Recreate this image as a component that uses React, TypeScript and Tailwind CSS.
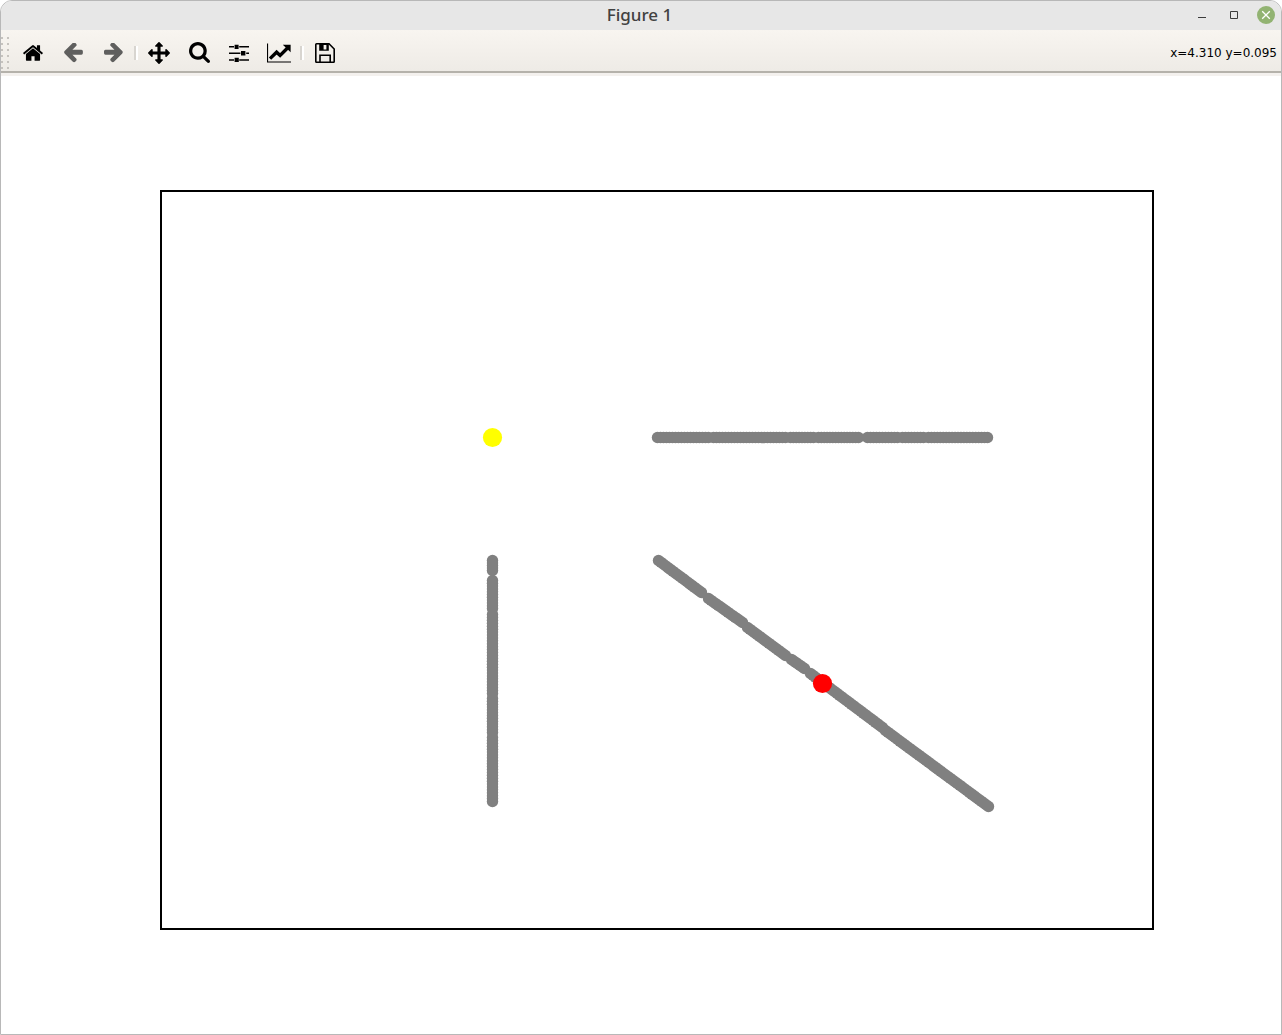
import type { ReactNode } from "react";

type Point = [number, number];

type Run = {
  from: Point;
  to: Point;
};

// canvas coordinates, each run is a stretch of densely sampled points
const runs: Run[] = [
  { from: [656, 361], to: [707, 361] },
  { from: [712, 361], to: [784, 361] },
  { from: [789, 361], to: [812, 361] },
  { from: [817, 361], to: [857, 361] },
  { from: [866, 361], to: [896, 361] },
  { from: [901, 361], to: [922, 361] },
  { from: [927, 361], to: [986, 361] },
  { from: [491, 484], to: [491, 494] },
  { from: [491, 504], to: [491, 532] },
  { from: [491, 538], to: [491, 617] },
  { from: [491, 622], to: [491, 656] },
  { from: [491, 661], to: [491, 725] },
  { from: [657, 484], to: [700, 516] },
  { from: [707, 522], to: [741, 546] },
  { from: [746, 551], to: [784, 579] },
  { from: [790, 583], to: [803, 592] },
  { from: [809, 597], to: [881, 651] },
  { from: [884, 654], to: [987, 730] },
];

const samplePoints = ({ from, to }: Run): Point[] => {
  const steps = Math.ceil(Math.hypot(to[0] - from[0], to[1] - from[1]) / 3);
  return Array.from({ length: steps + 1 }, (_, i): Point => [
    from[0] + ((to[0] - from[0]) * i) / steps + 0.5,
    from[1] + ((to[1] - from[1]) * i) / steps + 0.5,
  ]);
};

const wallPoints = runs.flatMap(samplePoints);

const HomeIcon = () => (
  <svg viewBox="0 0 1792 1792" className="w-[22px] h-[22px]" fill="currentColor">
    <path d="M1472 992v480q0 26-19 45t-45 19h-384v-384h-256v384h-384q-26 0-45-19t-19-45v-480q0-1 .5-3t.5-3l575-474 575 474q1 2 1 6zm223-69l-62 74q-8 9-21 11h-3q-13 0-21-7l-692-577-692 577q-12 8-24 7-13-2-21-11l-62-74q-8-10-7-23.5t11-21.5l719-599q32-26 76-26t76 26l244 204v-195q0-14 9-23t23-9h192q14 0 23 9t9 23v408l219 182q10 8 11 21.5t-7 23.5z" />
  </svg>
);

const BackIcon = () => (
  <svg viewBox="182 141 1492 1502" className="w-[19px] h-5" fill="currentColor">
    <path d="M1664 896v128q0 53-32.5 90.5t-84.5 37.5h-704l293 294q38 36 38 90t-38 90l-75 76q-37 37-90 37-52 0-91-37l-651-652q-37-37-37-90 0-52 37-91l651-650q38-38 91-38 52 0 90 38l75 74q38 38 38 91t-38 91l-293 293h704q52 0 84.5 37.5t32.5 90.5z" transform="translate(0 -128)" />
  </svg>
);

const ForwardIcon = () => (
  <svg viewBox="182 141 1492 1502" className="w-[19px] h-5" fill="currentColor">
    <path d="M1664 896v128q0 53-32.5 90.5t-84.5 37.5h-704l293 294q38 36 38 90t-38 90l-75 76q-37 37-90 37-52 0-91-37l-651-652q-37-37-37-90 0-52 37-91l651-650q38-38 91-38 52 0 90 38l75 74q38 38 38 91t-38 91l-293 293h704q52 0 84.5 37.5t32.5 90.5z" transform="translate(1846 -128) scale(-1 1)" />
  </svg>
);

const PanIcon = () => (
  <svg viewBox="0 0 1792 1792" className="w-[22px] h-[22px]" fill="currentColor">
    <path d="M1792 896q0 26-19 45l-256 256q-19 19-45 19t-45-19-19-45v-128h-384v384h128q26 0 45 19t19 45-19 45l-256 256q-19 19-45 19t-45-19l-256-256q-19-19-19-45t19-45 45-19h128v-384h-384v128q0 26-19 45t-45 19-45-19l-256-256q-19-19-19-45t19-45l256-256q19-19 45-19t45 19 19 45v128h384v-384h-128q-26 0-45-19t-19-45 19-45l256-256q19-19 45-19t45 19l256 256q19 19 19 45t-19 45-45 19h-128v384h384v-128q0-26 19-45t45-19 45 19l256 256q19 19 19 45z" />
  </svg>
);

const ZoomIcon = () => (
  <svg viewBox="64 128 1664 1664" className="w-[21px] h-[21px]" fill="currentColor">
    <path d="M1216 832q0-185-131.5-316.5t-316.5-131.5-316.5 131.5-131.5 316.5 131.5 316.5 316.5 131.5 316.5-131.5 131.5-316.5zm512 832q0 52-38 90t-90 38q-54 0-90-38l-343-342q-179 124-399 124-143 0-273.5-55.5t-225-150-150-225-55.5-273.5 55.5-273.5 150-225 225-150 273.5-55.5 273.5 55.5 225 150 150 225 55.5 273.5q0 220-124 399l343 343q37 37 37 90z" />
  </svg>
);

const SubplotsIcon = () => (
  <svg viewBox="0 0 20 20" className="w-5 h-5" fill="currentColor">
    <path d="M0 3h5v1.6H0zM10.2 3H20v1.6h-9.8zM5.6 1.8h4v4.2h-4z" />
    <path d="M0 9.5h11.4v1.6H0zM17.2 9.5H20v1.6h-2.8zM12 8.1h4.4v4.4H12z" />
    <path d="M0 16.2h5v1.6H0zM10.2 16.2H20v1.6h-9.8zM5.6 14.8h4.2V19H5.6z" />
  </svg>
);

const EditIcon = () => (
  <svg viewBox="0 0 24 20" className="w-6 h-5">
    <path d="M0.5 0.5V19H24" fill="none" stroke="currentColor" strokeWidth="1.2" />
    <path d="M3 15.6L9.6 9.2l3.5 3.3 7.2-7.2" fill="none" stroke="currentColor" strokeWidth="3.4" />
    <path d="M15.8 1.8h7.8v7.5z" fill="currentColor" />
  </svg>
);

const SaveIcon = () => (
  <svg viewBox="0 0 20 20" className="w-5 h-5">
    <path
      d="M1.5.8H14L19.2 6v12.5q0 .7-.7.7h-17q-.7 0-.7-.7v-17Q.8.8 1.5.8z"
      fill="none"
      stroke="currentColor"
      strokeWidth="1.6"
    />
    <path d="M4.2 1h9.6v6.8H4.2zM8.6 2v4.4h2.8V2z" fill="currentColor" fillRule="evenodd" />
    <path d="M5 19v-6.8h10.2V19" fill="none" stroke="currentColor" strokeWidth="1.6" />
  </svg>
);

type ToolButtonProps = {
  label: string;
  disabled?: boolean;
  children: ReactNode;
};

const ToolButton = ({ label, disabled, children }: ToolButtonProps) => (
  <button
    type="button"
    aria-label={label}
    disabled={disabled}
    className="flex items-center justify-center w-10 h-9 shrink-0 text-black disabled:text-[#5f5f5e]"
  >
    {children}
  </button>
);

const Separator = () => (
  <div className="flex justify-center w-[6px] shrink-0">
    <div className="w-1 h-[14px] border-l-2 border-[#d8d5d0] bg-white" />
  </div>
);

const Grip = () => (
  <div className="grid grid-cols-2 gap-x-1 gap-y-1 w-2 mr-1 shrink-0">
    {Array.from({ length: 12 }, (_, i) => (
      <span key={i} className="w-[2px] h-[2px] bg-[#c6c3be]" />
    ))}
  </div>
);

const TitleBar = () => (
  <header className="grid grid-cols-[1fr_auto_1fr] items-center h-[29px] pr-[3px] pb-[2px] bg-[#e7e7e7]">
    <h1 className="col-start-2 font-['Noto_Sans',sans-serif] text-[17px] leading-5 font-medium text-[#414141]">
      Figure 1
    </h1>
    <div className="flex justify-end gap-2 text-[#3c3c3c]">
      <button type="button" aria-label="Minimize" className="flex items-center justify-center w-6 h-6">
        <svg viewBox="0 0 8 8" className="w-2 h-2">
          <path d="M0 6.5h8" stroke="currentColor" />
        </svg>
      </button>
      <button type="button" aria-label="Maximize" className="flex items-center justify-center w-6 h-6">
        <svg viewBox="0 0 8 8" className="w-2 h-2">
          <path d="M.5.5h7v7h-7z" fill="none" stroke="currentColor" />
        </svg>
      </button>
      <button type="button" aria-label="Close" className="flex items-center justify-center w-6 h-6">
        <svg viewBox="0 0 18 18" className="w-[18px] h-[18px]">
          <circle cx="9" cy="9" r="9" fill="#92b372" />
          <path d="M5.2 5.2l7.6 7.6M12.8 5.2l-7.6 7.6" stroke="#fff" strokeWidth="1.3" />
        </svg>
      </button>
    </div>
  </header>
);

const Toolbar = () => (
  <div className="border-b-2 border-[#b5b2ab]">
    <div className="flex items-center h-[41px] pt-1 bg-linear-to-b from-[#f8f5f0] to-[#eeebe6]">
      <Grip />
      <ToolButton label="Home">
        <HomeIcon />
      </ToolButton>
      <ToolButton label="Back" disabled>
        <BackIcon />
      </ToolButton>
      <ToolButton label="Forward" disabled>
        <ForwardIcon />
      </ToolButton>
      <Separator />
      <ToolButton label="Pan">
        <PanIcon />
      </ToolButton>
      <ToolButton label="Zoom">
        <ZoomIcon />
      </ToolButton>
      <ToolButton label="Subplots">
        <SubplotsIcon />
      </ToolButton>
      <ToolButton label="Customize">
        <EditIcon />
      </ToolButton>
      <Separator />
      <ToolButton label="Save">
        <SaveIcon />
      </ToolButton>
      <output className="ml-auto pr-1 font-['DejaVu_Sans',sans-serif] text-xs leading-4 text-black whitespace-nowrap">
        x=4.310 y=0.095
      </output>
    </div>
  </div>
);

const Figure = () => (
  <svg viewBox="0 0 1280 958" role="img" aria-label="Scatter plot" className="block w-full h-auto">
    <rect x="160" y="115" width="992" height="738" fill="none" stroke="#000" strokeWidth="2" />
    <g fill="#808080">
      {wallPoints.map(([x, y], index) => (
        <circle key={index} cx={x} cy={y} r="5.7" />
      ))}
    </g>
    <circle cx="491.5" cy="361.5" r="9.6" fill="#ffff00" />
    <circle cx="821.5" cy="607.5" r="9.6" fill="#ff0000" />
  </svg>
);

const App = () => {
  return (
    <div className="flex flex-col min-h-screen bg-white border border-[#b8b8b8] rounded-t-xl overflow-hidden">
      <TitleBar />
      <Toolbar />
      <main className="grow border-t-3 border-[#f4f1ee]">
        <Figure />
      </main>
    </div>
  );
};

export default App;
